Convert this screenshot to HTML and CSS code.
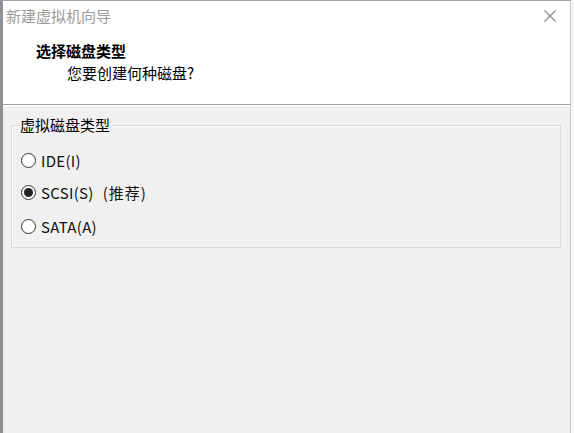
FILE: index.html
```html
<!DOCTYPE html>
<html>
<head>
    <meta http-equiv="Content-Type" content="text/html;charset=UTF-8"/>
    <title>新建虚拟机向导</title>
    <link rel="stylesheet" href="styles.css">
</head>
<body>
<div class="window">
    <div class="titlebar">
        <span class="title">新建虚拟机向导</span>
        <svg class="close" width="12" height="12" viewBox="0 0 12 12">
            <path d="M0.5 0.5 L11.5 11.5 M11.5 0.5 L0.5 11.5" stroke="#8a8a8a" stroke-width="1.2" fill="none"/>
        </svg>
    </div>
    <div class="header">
        <div class="heading">选择磁盘类型</div>
        <div class="subheading">您要创建何种磁盘?</div>
    </div>
    <div class="content">
        <fieldset class="group">
            <legend>虚拟磁盘类型</legend>
            <label class="option first">
                <input type="radio" name="disk"> IDE(I)
            </label>
            <label class="option second">
                <input type="radio" name="disk" checked> SCSI(S)<span class="hint">(推荐)</span>
            </label>
            <label class="option third">
                <input type="radio" name="disk"> SATA(A)
            </label>
        </fieldset>
    </div>
</div>
</body>
</html>
```

FILE: styles.css
```css
body {
    font-family: "Noto Sans CJK SC", "Liberation Sans", sans-serif;
    font-size: 15px;
    background-color: #f5f5f5;
    margin: 0;
    padding: 0;
    height: 433px;
    overflow: hidden;
}

.window {
    width: 567px;
    height: 432px;
    border-top: 1px solid #a2a2a8;
    border-left: 3px solid #8f8f96;
    border-right: 1px solid #c9c9c9;
    background: #f0f0f0;
}

.titlebar {
    height: 32px;
    background: #fff;
    display: flex;
    align-items: center;
    justify-content: space-between;
    padding: 0 14px 0 3px;
}

.title {
    color: #9b9b9b;
    line-height: 32px;
    position: relative;
    top: -1px;
}

.close {
    display: block;
    margin-top: -2px;
}

.header {
    background: #fff;
    padding: 7px 0 20px 0;
    border-bottom: 1px solid #a0a0a0;
    box-shadow: 0 1px 0 #fff;
}

.heading {
    font-weight: bold;
    line-height: 22px;
    margin-left: 33px;
    color: #000;
}

.subheading {
    line-height: 22px;
    margin-left: 64px;
    color: #000;
}

.content {
    padding: 10px 9px 0 8px;
}

.group {
    margin: 0;
    padding: 0 0 9px 9px;
    border: 1px solid #d9d9d9;
    box-shadow: inset 1px 1px 0 #fafafa;
}

.group legend {
    padding: 0 1px;
    margin-left: -2px;
    line-height: 20px;
    color: #000;
}

.option {
    display: flex;
    align-items: center;
    height: 24px;
    color: #111;
    letter-spacing: 0.3px;
}

.option.first {
    margin-top: 13px;
}

.option.second {
    margin-top: 8px;
}

.option.third {
    margin-top: 10px;
}

.option input {
    appearance: none;
    width: 15px;
    height: 15px;
    margin: 0 5px 0 0;
    border: 1px solid #333;
    border-radius: 50%;
    background: #fff;
    display: grid;
    place-items: center;
}

.option input:checked::after {
    content: "";
    width: 9px;
    height: 9px;
    border-radius: 50%;
    background: #222;
}

.hint {
    margin-left: 9px;
    letter-spacing: 1px;
}
```
